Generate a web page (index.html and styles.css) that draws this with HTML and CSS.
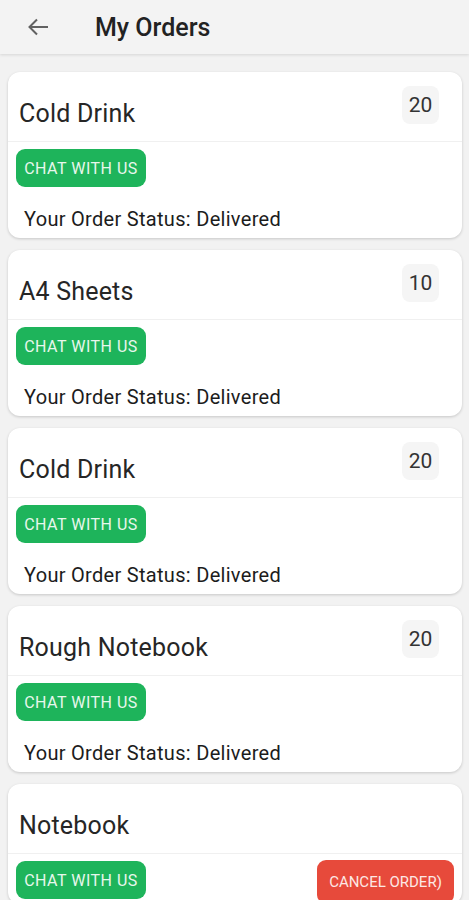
FILE: index.html
```html
<!DOCTYPE html>
<html lang="en">
<head>
    <meta charset="UTF-8">
    <meta name="viewport" content="width=device-width, initial-scale=1.0">
    <title>My Orders</title>
    <link rel="stylesheet" href="styles.css">
</head>
<body>
    <header class="topbar">
        <svg class="back" width="22" height="18" viewBox="0 0 22 18">
            <path d="M21 9H2.5M10 1.5L2.5 9L10 16.5" fill="none" stroke="#616161" stroke-width="2"/>
        </svg>
        <h1>My Orders</h1>
    </header>

    <div class="orders">
        <div class="card">
            <div class="card-head">
                <span class="item">Cold Drink</span>
                <span class="qty">20</span>
            </div>
            <div class="actions">
                <button class="btn chat">Chat with us</button>
            </div>
            <p class="status">Your Order Status: Delivered</p>
        </div>

        <div class="card">
            <div class="card-head">
                <span class="item">A4 Sheets</span>
                <span class="qty">10</span>
            </div>
            <div class="actions">
                <button class="btn chat">Chat with us</button>
            </div>
            <p class="status">Your Order Status: Delivered</p>
        </div>

        <div class="card">
            <div class="card-head">
                <span class="item">Cold Drink</span>
                <span class="qty">20</span>
            </div>
            <div class="actions">
                <button class="btn chat">Chat with us</button>
            </div>
            <p class="status">Your Order Status: Delivered</p>
        </div>

        <div class="card">
            <div class="card-head">
                <span class="item">Rough Notebook</span>
                <span class="qty">20</span>
            </div>
            <div class="actions">
                <button class="btn chat">Chat with us</button>
            </div>
            <p class="status">Your Order Status: Delivered</p>
        </div>

        <div class="card">
            <div class="card-head">
                <span class="item">Notebook</span>
            </div>
            <div class="actions">
                <button class="btn chat">Chat with us</button>
                <button class="btn cancel">Cancel Order)</button>
            </div>
        </div>
    </div>
</body>
</html>
```

FILE: styles.css
```css
body { margin: 0; font-family: Roboto, "Noto Sans", sans-serif; background-color: #f2f2f2; color: #212121; }
.topbar { display: flex; align-items: center; height: 54px; padding-left: 27px; background: #f3f3f3; box-shadow: 0 1px 3px rgba(0,0,0,0.12); }
.back { display: block; }
.topbar h1 { margin: 0 0 0 46px; font-size: 25px; font-weight: 500; color: #222; }
.orders { display: flex; flex-direction: column; gap: 12px; padding: 18px 7px 0 8px; }
.card { background: white; border-radius: 12px; box-shadow: 0 1px 3px rgba(0,0,0,0.18); }
.card-head { display: flex; justify-content: space-between; align-items: flex-start; height: 70px; padding: 0 23px 0 11px; border-bottom: 1px solid #f0f0f0; box-sizing: border-box; }
.item { margin-top: 27px; font-size: 25px; line-height: 29px; color: #262626; letter-spacing: 0.2px; }
.qty { margin-top: 14px; width: 37px; height: 38px; line-height: 38px; text-align: center; font-size: 21px; color: #333; background: #f5f5f5; border-radius: 8px; }
.actions { display: flex; justify-content: space-between; align-items: flex-start; padding: 7px 8px 0 8px; }
.btn { height: 38px; padding: 0; border: none; border-radius: 9px; font-family: Roboto, sans-serif; font-size: 16px; letter-spacing: 0.5px; text-transform: uppercase; cursor: pointer; }
.chat { width: 130px; background-color: #1eb45b; color: #e8f7ec; }
.cancel { width: 137px; height: 44px; margin-top: -1px; background-color: #e74a3b; color: #fde8e5; font-size: 15px; letter-spacing: 0; }
.status { margin: 0; padding: 20px 16px 7px 16px; font-size: 20px; line-height: 24px; letter-spacing: 0.3px; color: #1c1c1c; }
```
